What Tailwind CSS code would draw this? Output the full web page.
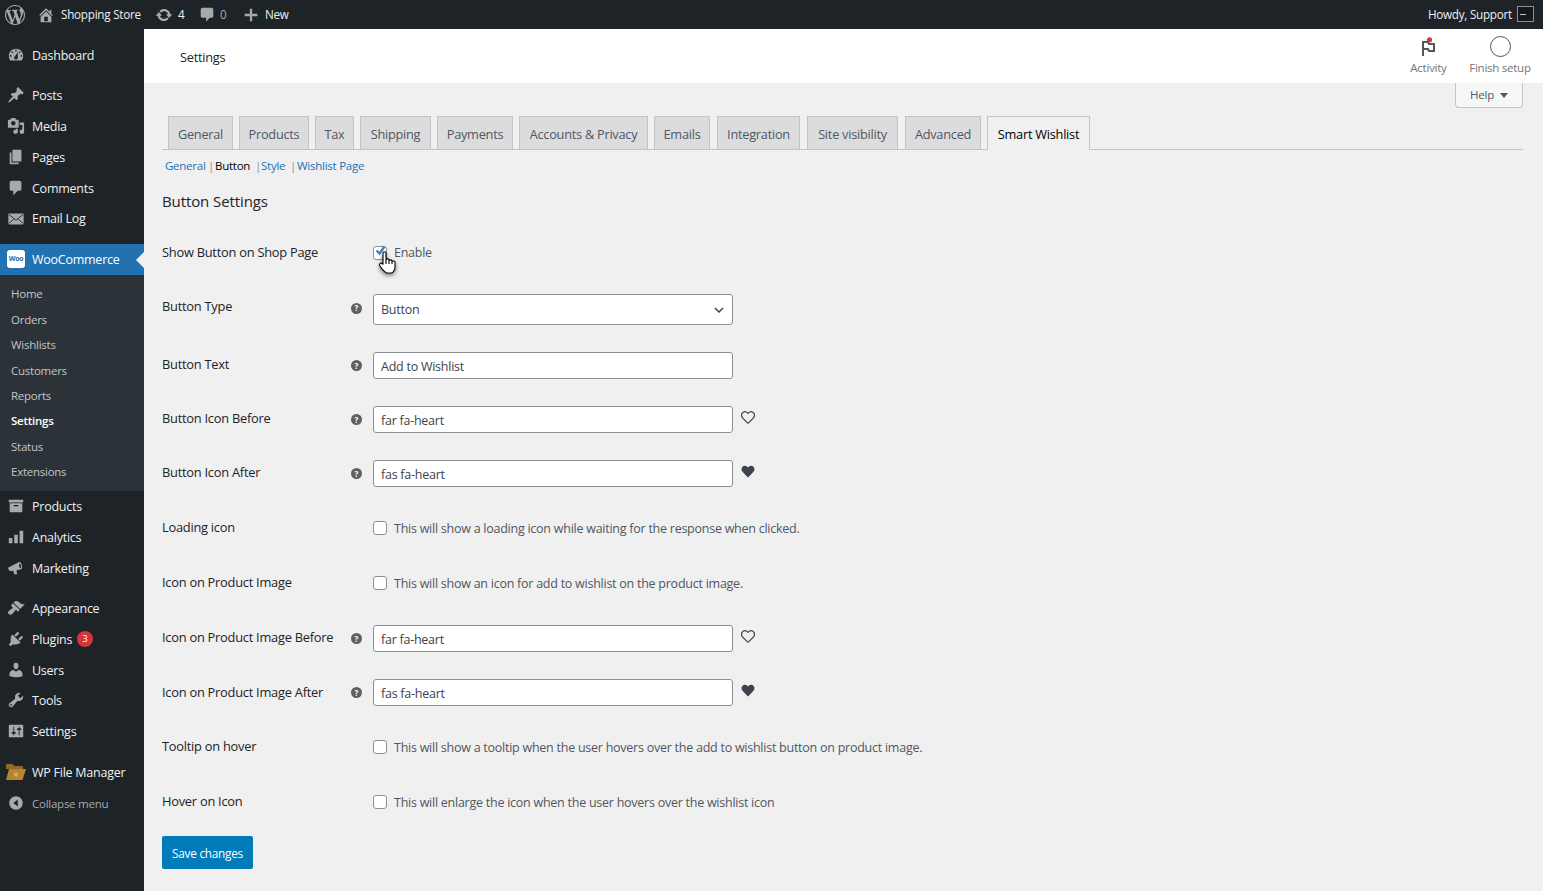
<!DOCTYPE html>
<html lang="en">
<head>
    <meta charset="UTF-8">
    <title>Settings ‹ Shopping Store — WooCommerce</title>
    <script src="https://cdn.jsdelivr.net/npm/@tailwindcss/browser@4"></script>
</head>
<body class="bg-[#f0f0f1] font-['Open_Sans','Noto_Sans',sans-serif] text-[13px] tracking-[-0.25px] text-[#3c434a] overflow-hidden">
<div class="w-[1543px] h-[891px] flex flex-col overflow-hidden">

    <!-- admin bar -->
    <header class="h-[29px] shrink-0 bg-[#1d2327] text-[#f0f0f1] flex items-center text-[11.7px]">
        <svg class="w-[20px] h-[20px] ml-[5px] text-[#a7aaad]" viewBox="0 0 20 20" fill="currentColor"><path d="M20 10c0-5.510-4.490-10-10-10C4.480 0 0 4.490 0 10c0 5.520 4.480 10 10 10 5.510 0 10-4.480 10-10zM7.780 15.370L4.370 6.220c.55-.02 1.170-.08 1.170-.08.5-.06.44-1.130-.06-1.110 0 0-1.450.11-2.370.11-.18 0-.37 0-.58-.01C4.120 2.690 6.870 1.110 10 1.110c2.330 0 4.450.87 6.050 2.340-.68-.11-1.650.39-1.650 1.580 0 .74.45 1.360.9 2.100.35.61.55 1.360.55 2.460 0 1.490-1.400 5-1.400 5l-3.030-8.370c.54-.02.82-.17.82-.17.5-.05.44-1.250-.06-1.220 0 0-1.440.12-2.380.12-.87 0-2.330-.12-2.330-.12-.5-.03-.56 1.200-.06 1.220l.92.080 1.260 3.410zM17.410 10c.24-.64.74-1.870.43-4.250.7 1.290 1.050 2.710 1.050 4.250 0 3.290-1.730 6.240-4.400 7.780.97-2.590 1.940-5.200 2.920-7.780zM6.100 18.090C3.120 16.630 1.110 13.530 1.110 10c0-1.300.23-2.480.72-3.590C3.250 10.300 4.670 14.200 6.100 18.090zm4.030-6.630l2.580 6.980c-.88.33-1.780.45-2.710.45-.8 0-1.560-.08-2.270-.3.960-2.410 1.630-4.720 2.400-7.130z"/></svg>
        <svg class="w-[18px] h-[18px] ml-[12px] text-[#a7aaad]" viewBox="0 0 20 20" fill="currentColor"><path d="M16 8.500l1.530 1.530-1.060 1.060L10 4.620l-6.470 6.470-1.060-1.060L10 2.500l4 4v-2h2v4zm-6-2.460l6 5.990V18H4v-5.970zM12 17v-5H8v5h4z"/></svg>
        <span class="ml-[6px] w-[85px] whitespace-nowrap pt-px">Shopping Store</span>
        <svg class="w-[18px] h-[18px] ml-[9px] text-[#a7aaad]" viewBox="0 0 20 20" fill="currentColor"><path d="M10.200 3.280c3.530 0 6.430 2.610 6.920 6h2.080l-3.500 4-3.500-4h2.320c-.45-1.970-2.210-3.450-4.320-3.450-1.450 0-2.730.71-3.540 1.780L4.950 5.660C6.230 4.200 8.110 3.280 10.200 3.280zm-.4 13.440c-3.520 0-6.430-2.610-6.920-6H.8l3.500-4c1.170 1.330 2.330 2.670 3.500 4H5.480c.45 1.970 2.210 3.450 4.320 3.450 1.450 0 2.730-.71 3.540-1.780l1.710 1.950c-1.280 1.460-3.150 2.380-5.250 2.380z"/></svg>
        <span class="ml-[5px] w-[8px] pt-px">4</span>
        <svg class="w-[18px] h-[18px] ml-[12px] text-[#a7aaad]" viewBox="0 0 20 20" fill="currentColor"><path d="M5 2h10c1.100 0 2 .9 2 2v7c0 1.100-.9 2-2 2h-2l-4 4.500V13H5c-1.100 0-2-.9-2-2V4c0-1.100.9-2 2-2z"/></svg>
        <span class="ml-[4px] w-[8px] text-[#a7aaad] pt-px">0</span>
        <svg class="w-[18px] h-[18px] ml-[14px] text-[#a7aaad]" viewBox="0 0 20 20" fill="currentColor"><path d="M8.700 3h2.600v5.700H17v2.600h-5.700V17H8.700v-5.700H3V8.700h5.700z"/></svg>
        <span class="ml-[5px] pt-px">New</span>
        <div class="ml-auto flex items-center mr-[9px]">
            <span class="pt-px">Howdy, Support</span>
            <div class="w-[17px] h-[16px] ml-[5px] border border-[#8c8f94] bg-[#14181b] flex items-center"><div class="w-[6px] h-px ml-[2px] bg-[#c3c4c7]"></div></div>
        </div>
    </header>

    <div class="flex flex-1 min-h-0">
        <!-- sidebar -->
        <nav class="w-[144px] shrink-0 bg-[#1d2327] text-[#f0f0f1] pt-[11px] text-[12.5px]">
            <a class="h-[30.8px] flex items-center"><svg class="w-[18px] h-[18px] ml-[7px] text-[#a7aaad]" viewBox="0 0 20 20" fill="currentColor"><path d="M3.760 16h12.480c1.100-1.370 1.760-3.110 1.760-5 0-4.420-3.580-8-8-8s-8 3.580-8 8c0 1.890.66 3.630 1.760 5zM10 4c.55 0 1 .45 1 1s-.45 1-1 1-1-.45-1-1 .45-1 1-1zM6 6c.55 0 1 .45 1 1s-.45 1-1 1-1-.45-1-1 .45-1 1-1zm8 0c.55 0 1 .45 1 1s-.45 1-1 1-1-.45-1-1 .45-1 1-1zm-5.370 5.550L12 7v6c0 1.100-.9 2-2 2s-2-.9-2-2c0-.57.24-1.080.63-1.450zM4 10c.55 0 1 .45 1 1s-.45 1-1 1-1-.45-1-1 .45-1 1-1zm12 0c.55 0 1 .45 1 1s-.45 1-1 1-1-.45-1-1 .45-1 1-1z" fill-rule="evenodd"/></svg><span class="ml-[7px] pt-[2px]">Dashboard</span></a>

            <div class="mt-[9.2px]">
                <a class="h-[30.8px] flex items-center"><svg class="w-[18px] h-[18px] ml-[7px] text-[#a7aaad]" viewBox="0 0 20 20" fill="currentColor"><path d="M10.440 3.020l1.820-1.820 6.360 6.350-1.830 1.820c-1.050-.68-2.480-.57-3.410.36l-.75.75c-.92.93-1.040 2.350-.35 3.410l-1.830 1.820-2.410-2.410-2.800 2.790c-.42.42-3.380 2.710-3.800 2.290s1.860-3.390 2.280-3.810l2.790-2.790L4.100 9.360l1.830-1.820c1.050.69 2.480.57 3.400-.36l.75-.75c.93-.92 1.050-2.350.36-3.410z"/></svg><span class="ml-[7px] pt-[2px]">Posts</span></a>
                <a class="h-[30.8px] flex items-center"><svg class="w-[18px] h-[18px] ml-[7px] text-[#a7aaad]" viewBox="0 0 20 20" fill="currentColor"><path d="M13 11V4c0-.55-.45-1-1-1h-1.670L9 1H5L3.670 3H2c-.55 0-1 .45-1 1v7c0 .55.45 1 1 1h10c.55 0 1-.45 1-1zM7 4.500c1.380 0 2.500 1.120 2.500 2.500S8.380 9.500 7 9.500 4.500 8.380 4.500 7 5.620 4.500 7 4.500zM14 6h5v10.500c0 1.380-1.120 2.500-2.500 2.500S14 17.880 14 16.500s1.120-2.500 2.500-2.500c.17 0 .34.02.5.05V9h-3V6zm-4 8.050V13h2v3.500c0 1.380-1.120 2.500-2.500 2.500S7 17.880 7 16.500 8.120 14 9.500 14c.17 0 .34.02.5.05z"/></svg><span class="ml-[7px] pt-[3px]">Media</span></a>
                <a class="h-[30.8px] flex items-center"><svg class="w-[18px] h-[18px] ml-[7px] text-[#a7aaad]" viewBox="0 0 20 20" fill="currentColor"><path d="M6 15V2h10v13H6zm-1 1h8v2H3V5h2v11z"/></svg><span class="ml-[7px] pt-[3px]">Pages</span></a>
                <a class="h-[30.8px] flex items-center"><svg class="w-[18px] h-[18px] ml-[7px] text-[#a7aaad]" viewBox="0 0 20 20" fill="currentColor"><path d="M5 2h9c1.100 0 2 .9 2 2v7c0 1.100-.9 2-2 2h-2l-5 5v-5H5c-1.100 0-2-.9-2-2V4c0-1.100.9-2 2-2z"/></svg><span class="ml-[7px] pt-[3px]">Comments</span></a>
                <a class="h-[30.8px] flex items-center"><svg class="w-[18px] h-[18px] ml-[7px]" viewBox="0 0 20 20"><rect x="1.500" y="4" width="17" height="12" rx="1" fill="#a7aaad"/><path d="M2 4.800l8 6.700 8-6.700M2 15.200l5.800-5.500M18 15.200l-5.800-5.500" fill="none" stroke="#1d2327"/></svg><span class="ml-[7px] pt-[2px]">Email Log</span></a>
            </div>

            <a class="h-[31px] mt-[10px] flex items-center bg-[#2271b1] text-white relative">
                <div class="w-[18px] h-[18px] ml-[7px] bg-white rounded-[3px] flex items-center justify-center text-[#2271b1] text-[7px] font-bold tracking-[-0.3px]">Woo</div>
                <span class="ml-[7px] pt-[2px]">WooCommerce</span>
                <div class="absolute right-0 top-[8px] border-y-[8px] border-y-transparent border-r-[8px] border-r-[#f0f0f1]"></div>
            </a>
            <div class="h-[216px] bg-[#2c3338] pt-[6.300px] text-[11.5px] text-[#c3c4c7]">
                <a class="h-[25.4px] pl-[11px] flex items-center">Home</a>
                <a class="h-[25.4px] pl-[11px] flex items-center pt-px">Orders</a>
                <a class="h-[25.4px] pl-[11px] flex items-center">Wishlists</a>
                <a class="h-[25.4px] pl-[11px] flex items-center">Customers</a>
                <a class="h-[25.4px] pl-[11px] flex items-center">Reports</a>
                <a class="h-[25.4px] pl-[11px] flex items-center font-semibold text-white">Settings</a>
                <a class="h-[25.4px] pl-[11px] flex items-center pt-px">Status</a>
                <a class="h-[25.4px] pl-[11px] flex items-center">Extensions</a>
            </div>

            <a class="h-[30.8px] flex items-center"><svg class="w-[18px] h-[18px] ml-[7px] text-[#a7aaad]" viewBox="0 0 20 20" fill="currentColor"><path d="M2 3h16v3H2zM3 7h14v10H3zm4.500 2v1.300h5V9z" fill-rule="evenodd"/></svg><span class="ml-[7px] pt-[2px]">Products</span></a>
            <a class="h-[30.8px] flex items-center"><svg class="w-[18px] h-[18px] ml-[7px] text-[#a7aaad]" viewBox="0 0 20 20" fill="currentColor"><path d="M2 11h4v6H2zM8 7.500h4V17H8zM14 3h4v14h-4z"/></svg><span class="ml-[7px] pt-[3px]">Analytics</span></a>
            <a class="h-[30.8px] flex items-center"><svg class="w-[18px] h-[18px] ml-[7px] text-[#a7aaad]" viewBox="0 0 20 20" fill="currentColor"><path d="M1.500 9.500L13 3.500c2.800-1.500 5.500 6.800 2.700 8l-5.200 1 .8 4.500H8l-1-4-3.500.3c-1.500-.3-2.500-2.700-2-3.800zM14 5.300c-1.300.4-.2 5 1.200 4.800 1.300-.4.200-5.200-1.200-4.800z" fill-rule="evenodd"/></svg><span class="ml-[7px] pt-[3px]">Marketing</span></a>

            <div class="mt-[9.200px]">
                <a class="h-[30.8px] flex items-center"><svg class="w-[18px] h-[18px] ml-[7px] text-[#a7aaad]" viewBox="0 0 20 20" fill="currentColor"><path d="M14.480 11.060L7.410 3.990l1.500-1.500c.5-.56 2.300-.47 3.510.32 1.210.8 1.430 1.280 2.910 2.100 1.180.64 2.450 1.260 4.450.85zm-.71.71L6.700 4.700 4.930 6.470c-.39.39-.39 1.020 0 1.410l1.060 1.060c.39.39.39 1.030 0 1.420-.6.6-1.430 1.110-2.210 1.690-.35.26-.7.53-1.010.84C1.430 13.230.39 15.400 1.800 16.800c1.400 1.410 3.570.37 4.930-1.040.33-.31.6-.67.87-1.020.58-.78 1.090-1.610 1.690-2.210.39-.39 1.020-.39 1.410 0l1.060 1.060c.39.39 1.020.39 1.410 0z"/></svg><span class="ml-[7px] pt-[3px]">Appearance</span></a>
                <a class="h-[30.8px] flex items-center"><svg class="w-[18px] h-[18px] ml-[7px] text-[#a7aaad]" viewBox="0 0 20 20" fill="currentColor"><path d="M13.110 4.360L9.870 7.600 8 5.730l3.240-3.240c.35-.34 1.050-.2 1.560.32.52.51.66 1.210.31 1.550zm-8 1.770l.91-1.120 9.010 9.010-1.190.84c-.71.71-2.630 1.160-3.820 1.160H6.140L4.900 17.260c-.59.59-1.540.59-2.120 0-.59-.58-.59-1.530 0-2.120l1.240-1.240v-3.880c0-1.130.4-3.190 1.090-3.890zm7.260 3.970l3.240-3.240c.34-.35 1.040-.21 1.550.31.52.51.66 1.210.31 1.550l-3.240 3.250z"/></svg><span class="ml-[7px] pt-[3px]">Plugins</span><span class="ml-[5px] w-[16px] h-[16px] rounded-full bg-[#d63638] text-white text-[9px] flex items-center justify-center tracking-normal">3</span></a>
                <a class="h-[30.8px] flex items-center"><svg class="w-[18px] h-[18px] ml-[7px] text-[#a7aaad]" viewBox="0 0 20 20" fill="currentColor"><path d="M10 9.250c-2.270 0-2.730-3.440-2.730-3.440C7 4.020 7.820 2 9.970 2c2.160 0 2.980 2.020 2.710 3.810 0 0-.41 3.440-2.680 3.440zm0 2.570L12.720 10c2.390 0 4.520 2.330 4.520 4.530v2.490s-3.650 1.130-7.240 1.130c-3.650 0-7.240-1.130-7.240-1.130v-2.490c0-2.250 1.940-4.480 4.470-4.480z"/></svg><span class="ml-[7px] pt-[3px]">Users</span></a>
                <a class="h-[30.8px] flex items-center"><svg class="w-[18px] h-[18px] ml-[7px] text-[#a7aaad]" viewBox="0 0 20 20" fill="currentColor"><path d="M16.680 9.770c-1.340 1.340-3.300 1.670-4.950.99l-5.410 6.520c-.99.99-2.590.99-3.580 0s-.99-2.590 0-3.570l6.520-5.420c-.68-1.650-.35-3.610.99-4.950 1.280-1.280 3.120-1.620 4.720-1.060l-2.890 2.890 2.820 2.820 2.860-2.870c.53 1.580.18 3.390-1.080 4.650zM3.810 16.210c.4.39 1.040.39 1.430 0 .4-.4.4-1.040 0-1.430-.39-.4-1.030-.4-1.430 0-.39.39-.39 1.030 0 1.430z" fill-rule="evenodd"/></svg><span class="ml-[7px] pt-[2px]">Tools</span></a>
                <a class="h-[30.8px] flex items-center"><svg class="w-[18px] h-[18px] ml-[7px] text-[#a7aaad]" viewBox="0 0 20 20" fill="currentColor"><path d="M18 16V4c0-.55-.45-1-1-1H3c-.55 0-1 .45-1 1v12c0 .55.45 1 1 1h14c.55 0 1-.45 1-1zM8 11h1c.55 0 1 .45 1 1s-.45 1-1 1H8v1.500c0 .28-.22.5-.5.5s-.5-.22-.5-.5V13H6c-.55 0-1-.45-1-1s.45-1 1-1h1V5.500c0-.28.22-.5.5-.5s.5.22.5.5V11zm5-2h-1c-.55 0-1-.45-1-1s.45-1 1-1h1V5.500c0-.28.22-.5.5-.5s.5.22.5.5V7h1c.55 0 1 .45 1 1s-.45 1-1 1h-1v5.500c0 .28-.22.5-.5.5s-.5-.22-.5-.5V9z" fill-rule="evenodd"/></svg><span class="ml-[7px] pt-[3px]">Settings</span></a>
            </div>

            <a class="h-[30.8px] mt-[10px] flex items-center"><svg class="w-[22px] h-[18px] ml-[5px]" viewBox="0 0 22 18"><path d="M1 2.500C1 1.500 1.500 1 2.500 1h5l2 2h7c1 0 1.500.5 1.500 1.500V6H1z" fill="#8f6a2a"/><path d="M4 6h17l-3.500 11H1z" fill="#b5842f"/><circle cx="11" cy="11.500" r="2.300" fill="#d3a85c"/></svg><span class="ml-[5px] pt-[3px]">WP File Manager</span></a>
            <a class="h-[30.8px] flex items-center text-[11.5px] text-[#a7aaad]"><svg class="w-[18px] h-[18px] ml-[7px] text-[#a7aaad]" viewBox="0 0 20 20" fill="currentColor"><path d="M10 2.500c4.140 0 7.500 3.360 7.500 7.500s-3.360 7.500-7.500 7.500S2.500 14.140 2.500 10 5.860 2.500 10 2.500zM12 14V6l-5 4z" fill-rule="evenodd"/></svg><span class="ml-[7px] pt-[1px]">Collapse menu</span></a>
        </nav>

        <!-- content -->
        <main class="flex-1 min-w-0 flex flex-col">
            <div class="h-[54px] shrink-0 bg-white flex items-center pl-[36px] text-[#1d2327] relative">
                <span class="pt-[3px] text-[12.75px]">Settings</span>
                <div class="ml-auto flex text-[11.5px] text-[#757575] mr-[12px] gap-[21px]">
                    <div class="w-[39px] flex flex-col items-center">
                        <svg class="w-[22px] h-[22px] mt-[1px] mb-[1px]" viewBox="0 0 22 22" fill="none"><path d="M5 20V6h5l1 2h5v7h-5l-1-2H5" stroke="#50575e" stroke-width="2"/><circle cx="11.500" cy="3.800" r="2.600" fill="#d63638"/></svg>
                        <span class="whitespace-nowrap">Activity</span>
                    </div>
                    <div class="w-[62px] flex flex-col items-center">
                        <div class="w-[21px] h-[21px] mt-[1px] rounded-full border-[1.5px] border-[#50575e] mb-[2px]"></div>
                        <span class="whitespace-nowrap">Finish setup</span>
                    </div>
                </div>
            </div>

            <div class="pl-[18px] pr-[20px]">
                <div class="flex justify-end h-[25px]">
                    <div class="w-[68px] h-[25px] bg-[#f6f7f7] border border-t-0 border-[#c3c4c7] rounded-b-[4px] flex items-center justify-center gap-[6px] text-[11.5px] text-[#50575e]">Help <span class="border-x-[4px] border-x-transparent border-t-[5px] border-t-[#50575e]"></span></div>
                </div>

                <!-- tabs -->
                <div class="mt-[9px] h-[33px] flex items-end border-b border-[#c3c4c7] pl-[6px] gap-[6px] font-medium text-[#50575e] text-[12.75px]">
                    <a class="w-[65px] h-[33px] pt-[3px] flex items-center justify-center bg-[#dcdcde] border border-b-0 border-[#c3c4c7]">General</a>
                    <a class="w-[70px] h-[33px] pt-[3px] flex items-center justify-center bg-[#dcdcde] border border-b-0 border-[#c3c4c7]">Products</a>
                    <a class="w-[39px] h-[33px] pt-[3px] flex items-center justify-center bg-[#dcdcde] border border-b-0 border-[#c3c4c7]">Tax</a>
                    <a class="w-[71px] h-[33px] pt-[3px] flex items-center justify-center bg-[#dcdcde] border border-b-0 border-[#c3c4c7]">Shipping</a>
                    <a class="w-[76px] h-[33px] pt-[3px] flex items-center justify-center bg-[#dcdcde] border border-b-0 border-[#c3c4c7]">Payments</a>
                    <a class="w-[129px] h-[33px] pt-[3px] flex items-center justify-center bg-[#dcdcde] border border-b-0 border-[#c3c4c7]">Accounts &amp; Privacy</a>
                    <a class="w-[56px] h-[33px] pt-[3px] flex items-center justify-center bg-[#dcdcde] border border-b-0 border-[#c3c4c7]">Emails</a>
                    <a class="w-[83px] h-[33px] pt-[3px] flex items-center justify-center bg-[#dcdcde] border border-b-0 border-[#c3c4c7] ml-[1px]">Integration</a>
                    <a class="w-[91px] h-[33px] pt-[3px] flex items-center justify-center bg-[#dcdcde] border border-b-0 border-[#c3c4c7] ml-[1px]">Site visibility</a>
                    <a class="w-[76px] h-[33px] pt-[3px] flex items-center justify-center bg-[#dcdcde] border border-b-0 border-[#c3c4c7] ml-[1px]">Advanced</a>
                    <a class="w-[103px] h-[34px] pt-[3px] -mb-px flex items-center justify-center bg-[#f0f0f1] border border-b-0 border-[#c3c4c7] text-black">Smart Wishlist</a>
                </div>

                <!-- sub nav -->
                <div class="mt-[7px] h-[18px] flex items-center pl-[3px] text-[11.5px] text-[#2271b1]">
                    <a class="w-[43px]">General</a><span class="w-[7px] text-[#8c8f94]">|</span><a class="w-[40px] font-medium text-black">Button</a><span class="w-[6px] text-[#8c8f94]">|</span><a class="w-[29px]">Style</a><span class="w-[7px] text-[#8c8f94]">|</span><a>Wishlist Page</a>
                </div>

                <h2 class="mt-[16px] h-[21px] flex items-center text-[15px] font-medium tracking-[-0.1px] text-[#1d2327]">Button Settings</h2>

                <!-- form rows -->
                <div class="mt-[15px] text-[#1d2327] font-medium text-[12.85px]">
                    <div class="h-[51px] flex items-center">
                        <label class="w-[211px]">Show Button on Shop Page</label>
                        <div class="relative flex items-center font-normal text-[#50575e] text-[12.5px]">
                            <input type="checkbox" class="appearance-none w-[14px] h-[14px] bg-white border border-[#8c8f94] rounded-[3px]">
                            <svg class="absolute left-[1px] top-[1px] w-[13px] h-[13px]" viewBox="0 0 13 13" fill="none"><path d="M2.500 6.500l3 3 5-7" stroke="#3582c4" stroke-width="2.200"/></svg>
                            <span class="ml-[7px] pt-[1px]">Enable</span>
                            <svg class="absolute left-[5px] top-[7px] w-[20px] h-[25px] drop-shadow-[0_2px_2px_rgba(0,0,0,0.5)]" viewBox="0 0 20 25" fill="#fff" stroke="#000" stroke-width="1.100"><path d="M5 14V3.300c0-2 3-2 3 0V10c0-1.500 3-1.500 3 0v1c0-1.500 3-1.500 3 0v1c0-1.400 3-1.400 3 .3v5.200c0 2.500-2 5-3.500 5.500H8.500C6.500 22 5 20 3.500 18.300L1.700 15.500c-1-1.800 1.500-3.300 2.300-1.800z"/><path d="M8 10v4M11 11v3M14 12v2" fill="none"/></svg>
                        </div>
                    </div>

                    <div class="h-[63px] flex items-center">
                        <label class="w-[189px] -mt-[5px]">Button Type</label>
                        <span class="w-[11px] h-[11px] -mt-[3px] mr-[11px] rounded-full bg-[#5f5f5f] text-white text-[8px] font-bold flex items-center justify-center tracking-normal">?</span>
                        <div class="w-[360px] h-[31px] bg-white border border-[#8c8f94] rounded-[3px] flex items-center px-[7px] font-normal text-[#3c434a] text-[12.5px]">
                            <span class="pt-[2px]">Button</span>
                            <svg class="ml-auto mr-[1px] w-[10px] h-[6px]" viewBox="0 0 10 6" fill="none"><path d="M1 1l4 4 4-4" stroke="#3c434a" stroke-width="1.500"/></svg>
                        </div>
                    </div>

                    <div class="h-[49px] flex items-center">
                        <label class="w-[189px] -mt-[1px]">Button Text</label>
                        <span class="w-[11px] h-[11px] mr-[11px] rounded-full bg-[#5f5f5f] text-white text-[8px] font-bold flex items-center justify-center tracking-normal">?</span>
                        <input value="Add to Wishlist" class="w-[360px] h-[27px] bg-white border border-[#8c8f94] rounded-[3px] px-[7px] pt-[2px] font-normal text-[#3c434a] text-[12.5px]">
                    </div>

                    <div class="h-[59px] flex items-center">
                        <label class="w-[189px] -mt-[1px]">Button Icon Before</label>
                        <span class="w-[11px] h-[11px] mr-[11px] rounded-full bg-[#5f5f5f] text-white text-[8px] font-bold flex items-center justify-center tracking-normal">?</span>
                        <input value="far fa-heart" class="w-[360px] h-[27px] bg-white border border-[#8c8f94] rounded-[3px] px-[7px] pt-[2px] font-normal text-[#3c434a] text-[12.5px]">
                        <svg class="ml-[8px] -mt-[5px] w-[14px] h-[13px]" viewBox="0 0 512 512" fill="none" stroke="#3c434a" stroke-width="48"><path d="M462.300 62.600C407.500 15.900 326 24.300 275.700 76.200L256 96.500l-19.700-20.300C186.100 24.300 104.500 15.900 49.700 62.600c-62.800 53.600-66.100 149.800-9.900 207.900l193.500 199.800c12.500 12.900 32.800 12.900 45.300 0l193.500-199.800c56.300-58.100 53-154.300-9.800-207.900z"/></svg>
                    </div>

                    <div class="h-[49px] flex items-center">
                        <label class="w-[189px] -mt-[1px]">Button Icon After</label>
                        <span class="w-[11px] h-[11px] mr-[11px] rounded-full bg-[#5f5f5f] text-white text-[8px] font-bold flex items-center justify-center tracking-normal">?</span>
                        <input value="fas fa-heart" class="w-[360px] h-[27px] bg-white border border-[#8c8f94] rounded-[3px] px-[7px] pt-[2px] font-normal text-[#3c434a] text-[12.5px]">
                        <svg class="ml-[8px] -mt-[5px] w-[14px] h-[13px]" viewBox="0 0 512 512" fill="#3c434a"><path d="M462.300 62.600C407.500 15.900 326 24.300 275.700 76.200L256 96.500l-19.700-20.300C186.100 24.300 104.500 15.900 49.700 62.600c-62.800 53.600-66.100 149.800-9.900 207.900l193.500 199.800c12.500 12.900 32.800 12.900 45.300 0l193.500-199.800c56.300-58.100 53-154.300-9.800-207.900z"/></svg>
                    </div>

                    <div class="h-[60px] flex items-center">
                        <label class="w-[211px] -mt-[1px]">Loading icon</label>
                        <input type="checkbox" class="appearance-none w-[14px] h-[14px] bg-white border border-[#8c8f94] rounded-[3px]">
                        <span class="ml-[7px] pt-[2px] font-normal text-[#50575e] text-[12.5px]">This will show a loading icon while waiting for the response when clicked.</span>
                    </div>

                    <div class="h-[50px] flex items-center">
                        <label class="w-[211px]">Icon on Product Image</label>
                        <input type="checkbox" class="appearance-none w-[14px] h-[14px] bg-white border border-[#8c8f94] rounded-[3px]">
                        <span class="ml-[7px] pt-[2px] font-normal text-[#50575e] text-[12.5px]">This will show an icon for add to wishlist on the product image.</span>
                    </div>

                    <div class="h-[61px] flex items-center">
                        <label class="w-[189px] -mt-[1px]">Icon on Product Image Before</label>
                        <span class="w-[11px] h-[11px] mr-[11px] rounded-full bg-[#5f5f5f] text-white text-[8px] font-bold flex items-center justify-center tracking-normal">?</span>
                        <input value="far fa-heart" class="w-[360px] h-[27px] bg-white border border-[#8c8f94] rounded-[3px] px-[7px] pt-[2px] font-normal text-[#3c434a] text-[12.5px]">
                        <svg class="ml-[8px] -mt-[5px] w-[14px] h-[13px]" viewBox="0 0 512 512" fill="none" stroke="#3c434a" stroke-width="48"><path d="M462.300 62.600C407.500 15.900 326 24.300 275.700 76.200L256 96.500l-19.700-20.300C186.100 24.300 104.500 15.900 49.700 62.600c-62.800 53.600-66.100 149.800-9.900 207.900l193.500 199.800c12.500 12.900 32.800 12.900 45.300 0l193.500-199.800c56.300-58.100 53-154.300-9.800-207.900z"/></svg>
                    </div>

                    <div class="h-[47px] flex items-center">
                        <label class="w-[189px]">Icon on Product Image After</label>
                        <span class="w-[11px] h-[11px] mr-[11px] rounded-full bg-[#5f5f5f] text-white text-[8px] font-bold flex items-center justify-center tracking-normal">?</span>
                        <input value="fas fa-heart" class="w-[360px] h-[27px] bg-white border border-[#8c8f94] rounded-[3px] px-[7px] pt-[2px] font-normal text-[#3c434a] text-[12.5px]">
                        <svg class="ml-[8px] -mt-[5px] w-[14px] h-[13px]" viewBox="0 0 512 512" fill="#3c434a"><path d="M462.300 62.600C407.500 15.900 326 24.300 275.700 76.200L256 96.500l-19.700-20.300C186.100 24.300 104.500 15.900 49.700 62.600c-62.800 53.600-66.100 149.800-9.900 207.900l193.500 199.800c12.500 12.900 32.800 12.900 45.300 0l193.500-199.800c56.300-58.100 53-154.300-9.800-207.900z"/></svg>
                    </div>

                    <div class="h-[62px] flex items-center">
                        <label class="w-[211px] -mt-[1px]">Tooltip on hover</label>
                        <input type="checkbox" class="appearance-none w-[14px] h-[14px] bg-white border border-[#8c8f94] rounded-[3px]">
                        <span class="ml-[7px] pt-[2px] font-normal text-[#50575e] text-[12.5px]">This will show a tooltip when the user hovers over the add to wishlist button on product image.</span>
                    </div>

                    <div class="h-[48px] flex items-center">
                        <label class="w-[211px] -mt-[1px]">Hover on Icon</label>
                        <input type="checkbox" class="appearance-none w-[14px] h-[14px] bg-white border border-[#8c8f94] rounded-[3px]">
                        <span class="ml-[7px] pt-[2px] font-normal text-[#50575e] text-[12.5px]">This will enlarge the icon when the user hovers over the wishlist icon</span>
                    </div>
                </div>

                <button class="mt-[10px] w-[91px] h-[33px] bg-[#007cba] rounded-[2px] text-white text-[11.8px] pt-[2px]">Save changes</button>
            </div>
        </main>
    </div>
</div>
</body>
</html>
